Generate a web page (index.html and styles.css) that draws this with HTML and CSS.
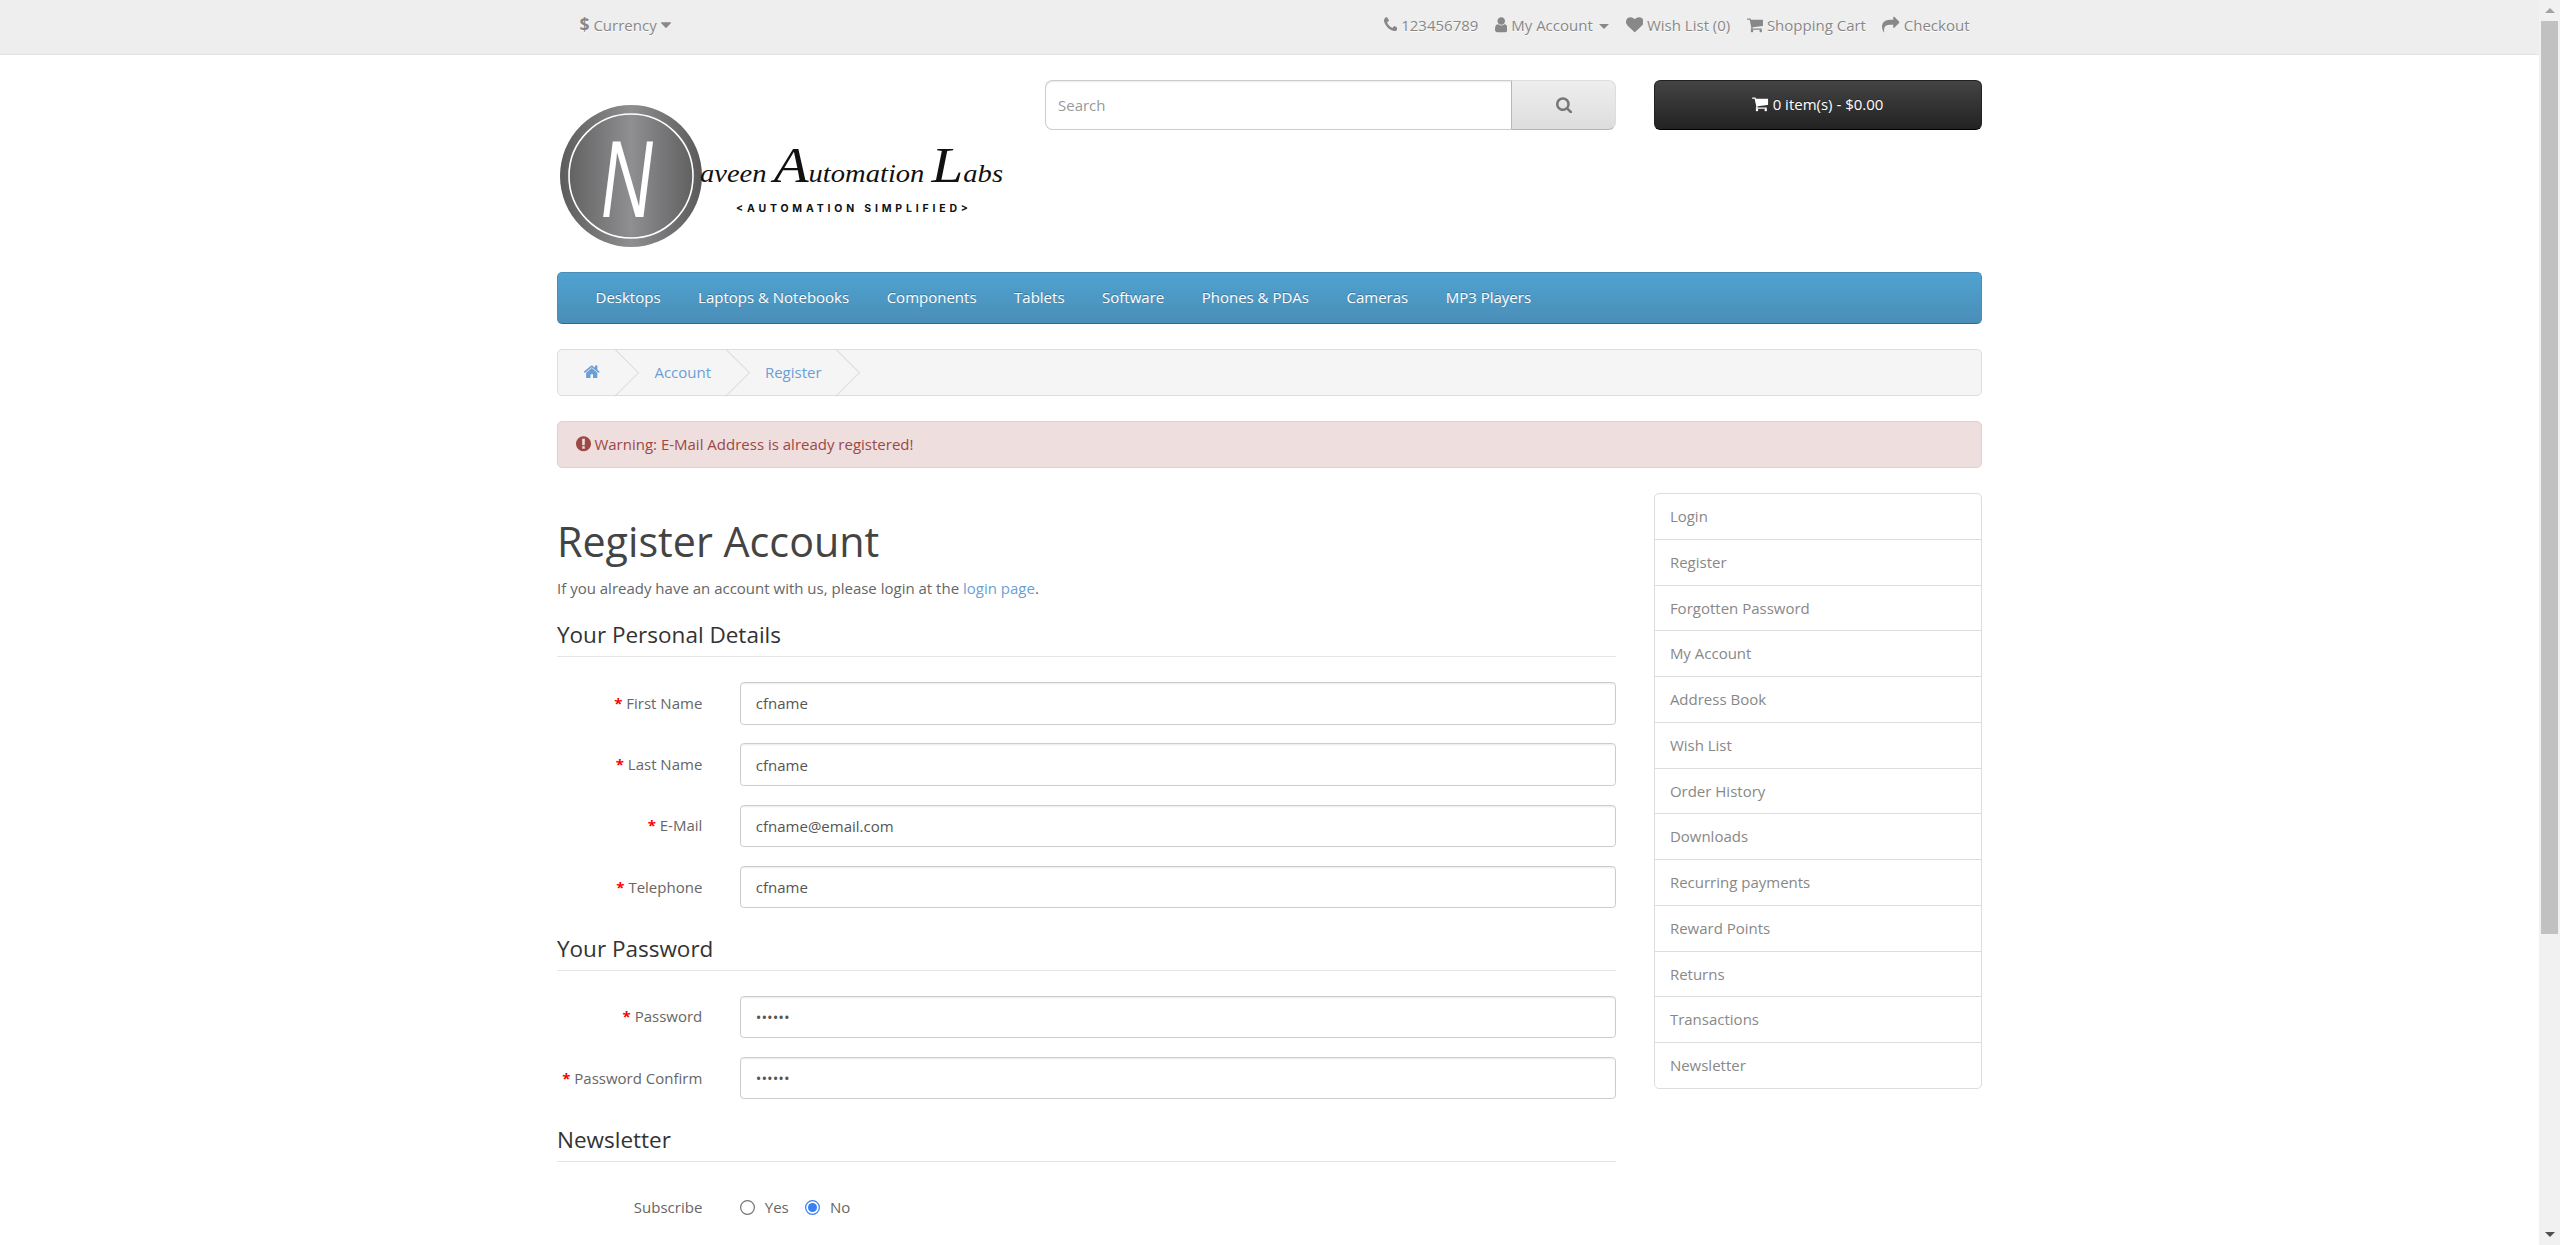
FILE: index.html
```html
<!DOCTYPE HTML>
<html>
<head>
<meta charset="utf-8">
<title>Register Account</title>
<link rel="stylesheet" href="styles.css">
</head>
<body>
<svg class="defs">
  <symbol id="i-phone" viewBox="192 0 1408 1792"><path d="M1600 1240q0 27-10 70.5t-21 68.5q-21 50-122 106-94 51-186 51-27 0-53-3.5t-57.5-12.5-47-14.5-55.5-20.5-49-18q-98-35-175-83-127-79-264-216t-216-264q-48-77-83-175-3-9-18-49t-20.5-55.5-14.5-47-12.5-57.5-3.5-53q0-92 51-186 56-101 106-122 25-11 68.5-21t70.5-10q14 0 21 3 18 6 53 76 11 19 30 54t35 63.5 31 53.5q3 4 17.5 25t21.5 35.5 7 28.5q0 20-28.5 50t-62 55-62 53-28.5 46q0 9 5 22.5t8.5 20.5 14 24 11.5 19q76 137 174 235t235 174q2 1 19 11.5t24 14 20.5 8.5 22.5 5q18 0 46-28.5t53-62 55-62 50-28.5q14 0 28.5 7t35.5 21.5 25 17.5q25 15 53.5 31t63.5 35 54 30q70 35 76 53 3 7 3 21z"/></symbol>
  <symbol id="i-user" viewBox="256 0 1280 1792"><path d="M1536 1399q0 109-62.5 187t-150.5 78h-854q-88 0-150.5-78t-62.5-187q0-85 8.5-160.5t31.5-152 58.5-131 94-89 134.5-34.5q131 128 313 128t313-128q76 0 134.5 34.5t94 89 58.5 131 31.5 152 8.5 160.5zm-256-887q0 159-112.5 271.5t-271.5 112.5-271.5-112.5-112.5-271.5 112.5-271.5 271.5-112.5 271.5 112.5 112.5 271.5z"/></symbol>
  <symbol id="i-heart" viewBox="0 0 1792 1792"><path d="M896 1664q-26 0-44-18l-624-602q-10-8-27.5-26t-55.5-65.5-68-97.5-53.5-121-23.5-138q0-220 127-344t351-124q62 0 126.5 21.5t120 58 95.5 68.5 76 68q36-36 76-68t95.5-68.5 120-58 126.5-21.5q224 0 351 124t127 344q0 221-229 450l-623 600q-18 18-44 18z"/></symbol>
  <symbol id="i-cart" viewBox="64 0 1664 1792"><path d="M704 1536q0 52-38 90t-90 38-90-38-38-90 38-90 90-38 90 38 38 90zm896 0q0 52-38 90t-90 38-90-38-38-90 38-90 90-38 90 38 38 90zm128-1088v512q0 24-16.5 42.5t-40.5 21.5l-1044 122q13 60 13 70 0 16-24 64h920q26 0 45 19t19 45-19 45-45 19h-1024q-26 0-45-19t-19-45q0-11 8-31.5t16-36 21.5-40 15.5-29.5l-177-823h-204q-26 0-45-19t-19-45 19-45 45-19h256q16 0 28.5 6.5t19.5 15.5 13 24.5 8 26 5.5 29.5 4.5 26h1201q26 0 45 19t19 45z"/></symbol>
  <symbol id="i-share" viewBox="0 0 1792 1792"><path d="M1792 640q0 26-19 45l-512 512q-19 19-45 19t-45-19-19-45v-256h-224q-98 0-175.5 6t-154 21.5-133 42.5-105.5 69.5-80 101-48.5 138.5-17.5 181q0 55 5 123 0 6 2.5 23.5t2.5 26.5q0 15-8.5 25t-23.5 10q-16 0-28-17-7-9-13-22t-13.5-30-10.5-24q-127-285-127-451 0-199 53-333 162-403 875-403h224v-256q0-26 19-45t45-19 45 19l512 512q19 19 19 45z"/></symbol>
  <symbol id="i-search" viewBox="64 0 1664 1792"><path d="M1216 832q0-185-131.5-316.5t-316.5-131.5-316.5 131.5-131.5 316.5 131.5 316.5 316.5 131.5 316.5-131.5 131.5-316.5zm512 832q0 52-38 90t-90 38q-54 0-90-38l-343-342q-179 124-399 124-143 0-273.5-55.5t-225-150-150-225-55.5-273.5 55.5-273.5 150-225 225-150 273.5-55.5 273.5 55.5 225 150 150 225 55.5 273.5q0 220-124 399l343 343q37 37 37 90z"/></symbol>
  <symbol id="i-home" viewBox="64 0 1664 1792"><path d="M1472 992v480q0 26-19 45t-45 19h-384v-384h-256v384h-384q-26 0-45-19t-19-45v-480q0-1 .5-3t.5-3l575-474 575 474q1 2 1 6zm223-69l-62 74q-8 9-21 11h-3q-13 0-21-7l-692-577-692 577q-12 8-24 7-13-2-21-11l-62-74q-8-10-7-23.5t11-21.5l719-599q32-26 76-26t76 26l244 204v-195q0-14 9-23t23-9h192q14 0 23 9t9 23v408l219 182q10 8 11 21.5t-7 23.5z"/></symbol>
  <symbol id="i-warn" viewBox="128 0 1536 1792"><path d="M896 128q209 0 385.5 103t279.5 279.5 103 385.5-103 385.5-279.5 279.5-385.5 103-385.5-103-279.5-279.5-103-385.5 103-385.5 279.5-279.5 385.5-103zm128 1247v-190q0-14-9-23.5t-22-9.5h-192q-13 0-23 10t-10 23v190q0 13 10 23t23 10h192q13 0 22-9.5t9-23.5zm-2-344l18-621q0-12-10-18-10-8-24-8h-220q-14 0-24 8-10 6-10 18l17 621q0 10 10 17.5t24 7.5h185q14 0 23.5-7.5t10.5-17.5z"/></symbol>
  <symbol id="i-caret" viewBox="384 0 1024 1792"><path d="M1408 704q0 26-19 45l-448 448q-19 19-45 19t-45-19l-448-448q-19-19-19-45t19-45 45-19h896q26 0 45 19t19 45z"/></symbol>
</svg>

<div class="window">
<div class="page">

  <nav id="top">
    <div class="container top-inner">
      <div class="currency"><strong>$</strong> <span>Currency</span> <svg class="fa w-caret"><use href="#i-caret"/></svg></div>
      <ul class="top-links">
        <li><a href="#"><svg class="fa w-phone"><use href="#i-phone"/></svg></a> <span>123456789</span></li>
        <li><a href="#"><svg class="fa w-user"><use href="#i-user"/></svg> <span>My Account</span> <span class="caret"></span></a></li>
        <li><a href="#"><svg class="fa w-heart"><use href="#i-heart"/></svg> <span>Wish List (0)</span></a></li>
        <li><a href="#"><svg class="fa w-cart"><use href="#i-cart"/></svg> <span>Shopping Cart</span></a></li>
        <li><a href="#"><svg class="fa w-share"><use href="#i-share"/></svg> <span>Checkout</span></a></li>
      </ul>
    </div>
  </nav>

  <header class="container head">
    <div class="logo">
      <svg class="logo-img" viewBox="0 0 450 180" role="img" aria-label="Naveen Automation Labs">
        <defs>
          <linearGradient id="steel" x1="0" x2="1" y1="0" y2="0">
            <stop offset="0" stop-color="#5c5c5c"/>
            <stop offset="0.5" stop-color="#8f8f92"/>
            <stop offset="1" stop-color="#5a5a5a"/>
          </linearGradient>
        </defs>
        <circle cx="74" cy="96" r="71" fill="url(#steel)"/>
        <circle cx="74" cy="96" r="62" fill="none" stroke="#fff" stroke-width="1.6"/>
        <text class="logo-n" x="44" y="137" textLength="52" lengthAdjust="spacingAndGlyphs">N</text>
        <text class="logo-script" x="143" y="102" textLength="303" lengthAdjust="spacingAndGlyphs">aveen <tspan class="logo-cap">A</tspan>utomation <tspan class="logo-cap">L</tspan>abs</text>
        <text class="logo-tag" x="179" y="132" textLength="232">&lt;AUTOMATION SIMPLIFIED&gt;</text>
      </svg>
    </div>
    <div class="search">
      <input class="search-input" type="text" placeholder="Search">
      <button class="btn-search" type="button"><svg class="fa w-search"><use href="#i-search"/></svg></button>
    </div>
    <div class="cart">
      <button class="btn-cart" type="button"><svg class="fa w-cart"><use href="#i-cart"/></svg> <span>0 item(s) - $0.00</span></button>
    </div>
  </header>

  <div class="container">
    <nav id="menu">
      <a href="#">Desktops</a>
      <a href="#">Laptops &amp; Notebooks</a>
      <a href="#">Components</a>
      <a href="#">Tablets</a>
      <a href="#">Software</a>
      <a href="#">Phones &amp; PDAs</a>
      <a href="#">Cameras</a>
      <a href="#">MP3 Players</a>
    </nav>
  </div>

  <div class="container">
    <ul class="breadcrumb">
      <li><a href="#"><svg class="fa w-home"><use href="#i-home"/></svg></a></li>
      <li><a href="#">Account</a></li>
      <li><a href="#">Register</a></li>
    </ul>
    <div class="alert"><svg class="fa w-warn"><use href="#i-warn"/></svg> Warning: E-Mail Address is already registered!</div>

    <div class="row">
      <main class="content">
        <h1>Register Account</h1>
        <p>If you already have an account with us, please login at the <a href="#">login page</a>.</p>
        <form>
          <fieldset>
            <legend>Your Personal Details</legend>
            <div class="form-group required"><label for="f1">First Name</label><div class="field"><input id="f1" class="form-control" type="text" value="cfname"></div></div>
            <div class="form-group required"><label for="f2">Last Name</label><div class="field"><input id="f2" class="form-control" type="text" value="cfname"></div></div>
            <div class="form-group required"><label for="f3">E-Mail</label><div class="field"><input id="f3" class="form-control" type="email" value="cfname@email.com"></div></div>
            <div class="form-group required"><label for="f4">Telephone</label><div class="field"><input id="f4" class="form-control" type="tel" value="cfname"></div></div>
          </fieldset>
          <fieldset>
            <legend>Your Password</legend>
            <div class="form-group required"><label for="f5">Password</label><div class="field"><input id="f5" class="form-control" type="password" value="cfname"></div></div>
            <div class="form-group required"><label for="f6">Password Confirm</label><div class="field"><input id="f6" class="form-control" type="password" value="cfname"></div></div>
          </fieldset>
          <fieldset>
            <legend>Newsletter</legend>
            <div class="form-group"><label>Subscribe</label><div class="field radios">
              <label class="radio-inline"><input type="radio" name="newsletter"> Yes</label>
              <label class="radio-inline"><input type="radio" name="newsletter" checked> No</label>
            </div></div>
          </fieldset>
        </form>
      </main>
      <aside class="sidebar">
        <a href="#">Login</a>
        <a href="#">Register</a>
        <a href="#">Forgotten Password</a>
        <a href="#">My Account</a>
        <a href="#">Address Book</a>
        <a href="#">Wish List</a>
        <a href="#">Order History</a>
        <a href="#">Downloads</a>
        <a href="#">Recurring payments</a>
        <a href="#">Reward Points</a>
        <a href="#">Returns</a>
        <a href="#">Transactions</a>
        <a href="#">Newsletter</a>
      </aside>
    </div>
  </div>

</div>
<div class="scrollbar">
  <div class="sb-btn"><span class="sb-up"></span></div>
  <div class="sb-track"><div class="sb-thumb"></div></div>
  <div class="sb-btn"><span class="sb-down"></span></div>
</div>
</div>
</body>
</html>
```

FILE: styles.css
```css
* { box-sizing: border-box; }
html, body { margin: 0; padding: 0; height: 100%; overflow: hidden; background: #fff; }
body {
  font-family: "Open Sans", sans-serif;
  font-weight: 400;
  font-size: 12px;
  line-height: 20px;
  color: #666;
}
a { color: #6a9fd6; text-decoration: none; }
ul { list-style: none; margin: 0; padding: 0; }
.defs { width: 0; height: 0; position: absolute; }

.window { display: flex; height: 100vh; overflow: hidden; }
/* the whole page was captured at 125% */
.page { flex: 1 1 0; min-width: 0; zoom: 1.25; overflow: hidden; }

.container { width: 1170px; margin: 0 auto; padding: 0 15px; }

/* icons */
.fa { display: inline-block; height: 14px; vertical-align: -2px; fill: currentColor; }
.w-phone { width: 11px; }
.w-user { width: 10px; }
.w-heart { width: 14px; }
.w-cart { width: 13px; }
.w-share { width: 14px; }
.w-search { width: 13px; }
.w-home { width: 14px; }
.w-warn { width: 12px; }
.w-caret { width: 8px; }

/* top bar */
#top {
  background: #eee;
  border-bottom: 1px solid #e2e2e2;
  padding: 4px 0 3px;
  margin: 0 0 20px;
  min-height: 43.7px;
}
#top .top-inner { padding: 0 20px; display: flex; justify-content: space-between; }
.currency { color: #888; text-shadow: 0 1px 0 #fff; padding: 6px 13px; }
.currency strong { font-size: 14px; line-height: 14px; }
.top-links { padding-top: 6px; text-align: right; }
.top-links li { display: inline-block; padding: 0 5px; color: #888; text-shadow: 0 1px 0 #fff; }
.top-links a { color: #888; }
.caret {
  display: inline-block;
  width: 0;
  height: 0;
  margin-left: 2px;
  vertical-align: middle;
  border-top: 4px solid;
  border-right: 4px solid transparent;
  border-left: 4px solid transparent;
}

/* header */
.head { display: flex; gap: 30px; }
.logo { flex: 0 0 330px; }
.logo-img { display: block; width: 360px; height: 144px; margin-bottom: 10px; }
.logo-n { font: italic 400 110px "Liberation Sans", sans-serif; fill: #fff; }
.logo-script { font: italic 400 25px "Liberation Serif", serif; fill: #111; }
.logo-cap { font-size: 50px; }
.logo-tag { font: 700 10.5px "Inter", "Liberation Sans", sans-serif; fill: #111; }
.search { flex: 0 0 457.5px; display: flex; height: 40px; margin-bottom: 10px; }
.search-input {
  flex: 1 1 0;
  min-width: 0;
  height: 40px;
  padding: 0 10px;
  font: 12px/20px "Open Sans", sans-serif;
  color: #555;
  background: #fff;
  border: 1px solid #ccc;
  border-right: 0;
  border-radius: 6px 0 0 6px;
  box-shadow: inset 0 1px 1px rgba(0,0,0,.075);
}
.search-input::placeholder { color: #999; opacity: 1; }
.btn-search {
  flex: 0 0 84px;
  height: 40px;
  padding: 0;
  font-size: 15px;
  color: #777;
  background: linear-gradient(to bottom, #eee, #ddd);
  border: 1px solid;
  border-color: #ddd #ddd #b3b3b3 #b7b7b7;
  border-radius: 0 6px 6px 0;
}
.cart { flex: 1 1 0; }
.btn-cart {
  display: block;
  width: 100%;
  height: 40px;
  padding: 0;
  font: 12px/18px "Open Sans", sans-serif;
  color: #fff;
  text-shadow: 0 -1px 0 rgba(0,0,0,.25);
  background: linear-gradient(to bottom, #444, #222);
  border: 1px solid;
  border-color: #222 #222 #000;
  border-radius: 5px;
}

/* menu */
#menu {
  display: flex;
  min-height: 40px;
  padding: 0 15px;
  margin-bottom: 20px;
  background: linear-gradient(to bottom, #4fa2d1, #4a8eb8);
  border: 1px solid;
  border-color: #4a8eb8 #4a8eb8 #2f6b8f;
  border-radius: 4px;
}
#menu a {
  color: #fff;
  text-shadow: 0 -1px 0 rgba(0,0,0,.25);
  padding: 9.5px 15px 10.5px;
}

/* breadcrumb */
.breadcrumb {
  margin: 0 0 20px;
  padding: 8px 0;
  background: #f5f5f5;
  border: 1px solid #ddd;
  border-radius: 4px;
}
.breadcrumb li { display: inline-block; position: relative; padding: 0 20px; white-space: nowrap; }
.breadcrumb li::after {
  content: "";
  display: block;
  position: absolute;
  top: -3px;
  right: -5px;
  width: 26px;
  height: 26px;
  border-right: 1px solid #ddd;
  border-bottom: 1px solid #ddd;
  transform: rotate(-45deg);
}

.alert {
  padding: 8px 14px;
  margin-bottom: 20px;
  color: #9c4845;
  background: #efdede;
  border: 1px solid #e8cdd0;
  border-radius: 4px;
}

/* main */
.row { display: flex; gap: 30px; }
.content { flex: 0 0 847.5px; min-width: 0; }
.sidebar { flex: 1 1 0; min-width: 0; }
h1 { margin: 20.5px 0 9.5px; font-size: 33px; font-weight: 400; line-height: 1.1; color: #444; }
p { margin: 0 0 10px; }
form { margin: 0; }
fieldset { margin: 0; padding: 0; border: 0; min-width: 0; }
legend {
  display: block;
  width: 100%;
  padding: 7px 0;
  margin-bottom: 20px;
  font-size: 18px;
  color: #333;
  border-bottom: 1px solid #e5e5e5;
}
.form-group { display: flex; margin-bottom: 15px; }
.form-group > label { flex: 0 0 116.25px; padding-top: 7px; text-align: right; }
.form-group.required > label::before { content: "* "; color: #f00; font-weight: bold; }
.field { flex: 1 1 0; min-width: 0; margin-left: 30px; }
.form-control {
  display: block;
  width: 100%;
  height: 34px;
  padding: 6px 12px;
  font: 12px/1.42857 "Open Sans", sans-serif;
  color: #555;
  background: #fff;
  border: 1px solid #ccc;
  border-radius: 3px;
  box-shadow: inset 0 1px 1px rgba(0,0,0,.075);
}
.radios { padding-top: 7px; display: flex; gap: 13px; }
.radio-inline { display: flex; align-items: center; gap: 7px; }
.radio-inline input { margin: 0; width: 13px; height: 13px; accent-color: #3b7ff5; }

/* side list */
.sidebar { display: flex; flex-direction: column; align-self: flex-start; margin-bottom: 20px; }
.sidebar a {
  display: block;
  padding: 8px 12px;
  margin-bottom: -1px;
  color: #888;
  text-shadow: 0 1px 0 #fff;
  background: #fff;
  border: 1px solid #ddd;
}
.sidebar a:first-child { border-radius: 4px 4px 0 0; }
.sidebar a:last-child { border-radius: 0 0 4px 4px; margin-bottom: 0; }

/* page scrollbar */
.scrollbar { flex: 0 0 21px; display: flex; flex-direction: column; background: #f1f1f1; }
.sb-btn { flex: 0 0 21px; display: flex; align-items: center; justify-content: center; }
.sb-up { border: 5px solid transparent; border-top: 0; border-bottom-color: #a3a3a3; }
.sb-down { border: 5px solid transparent; border-bottom: 0; border-top-color: #505050; }
.sb-track { flex: 1 1 0; padding: 0 2px; }
.sb-thumb { height: 913px; background: #c1c1c1; }
```
